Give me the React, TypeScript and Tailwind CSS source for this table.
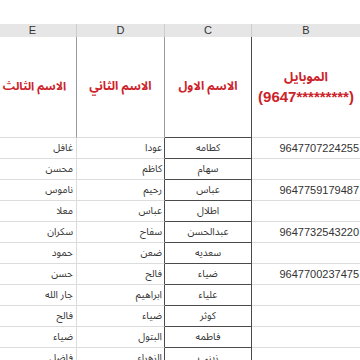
const rows: [string, string, string, string][] = [
  ['غافل', 'عودا', 'كطامه', '9647707224255'],
  ['محسن', 'كاظم', 'سهام', ''],
  ['ناموس', 'رحيم', 'عباس', '9647759179487'],
  ['معلا', 'عباس', 'اطلال', ''],
  ['سكران', 'سفاح', 'عبدالحسن', '9647732543220'],
  ['حمود', 'ضعن', 'سعديه', ''],
  ['حسن', 'فالح', 'ضياء', '9647700237475'],
  ['جار الله', 'ابراهيم', 'علياء', ''],
  ['فالح', 'ضياء', 'كوثر', ''],
  ['ضياء', 'البتول', 'فاطمه', ''],
  ['فاضل', 'الزهراء', 'زينب', ''],
];

const arabic = "font-['Noto_Sans_Arabic','Noto_Naskh_Arabic','DejaVu_Sans',sans-serif]";

export default function App() {
  return (
    <div className="h-[360px] w-[360px] overflow-hidden bg-white">
      <div className="h-[24px]" />
      <div className="-ml-[11px] w-[371px]">
        {/* column letters */}
        <div className="flex h-[13px] bg-[#e6e6e6] text-[11px] leading-[13px] text-[#333] font-['Liberation_Sans',Arial,sans-serif]">
          <div className="w-[88px] border-r border-[#cdcdcd] text-center">E</div>
          <div className="w-[88px] border-r border-[#cdcdcd] text-center">D</div>
          <div className="w-[87px] border-r border-[#cdcdcd] text-center">C</div>
          <div className="w-[108px] text-center">B</div>
        </div>

        {/* title row */}
        <div className="flex h-[101px] text-[12px] font-bold text-[#cc2229]">
          <div className={`flex w-[88px] items-center justify-center border-r border-b border-r-[#9a9a9a] border-b-[#dcdcdc] pl-[4px] text-[11.5px] ${arabic}`}>
            الاسم الثالث
          </div>
          <div className={`flex w-[88px] items-center justify-center border-r border-b border-r-[#9a9a9a] border-b-[#dcdcdc] ${arabic}`}>
            الاسم الثاني
          </div>
          <div className={`flex w-[87px] items-center justify-center border-r border-b border-[#4a4a4a] ${arabic}`}>
            الاسم الاول
          </div>
          <div className="flex w-[108px] flex-col items-center justify-center border-b border-[#dcdcdc] leading-[19px]">
            <span className={`text-[12.5px] ${arabic}`}>الموبايل</span>
            <span className="text-[15px] font-['Liberation_Sans',Arial,sans-serif]">(9647*********)</span>
          </div>
        </div>

        {/* data rows */}
        {rows.map(([e, d, c, b], i) => (
          <div key={i} className="flex h-[21px] text-[11px] leading-[20px] text-[#333]">
            <div className={`w-[88px] border-r border-b border-[#dcdcdc] pr-[3px] text-right text-[10px] ${arabic}`}>{e}</div>
            <div className={`w-[88px] border-r border-b border-r-[#4a4a4a] border-b-[#dcdcdc] pr-[2px] text-right text-[10px] ${arabic}`}>{d}</div>
            <div className={`w-[87px] border-r border-b border-[#4a4a4a] text-center text-[10px] ${arabic}`}>{c}</div>
            <div className="w-[108px] border-b border-[#dcdcdc] pr-[1px] text-right font-['Liberation_Sans',Arial,sans-serif]">{b}</div>
          </div>
        ))}
      </div>
    </div>
  );
}
